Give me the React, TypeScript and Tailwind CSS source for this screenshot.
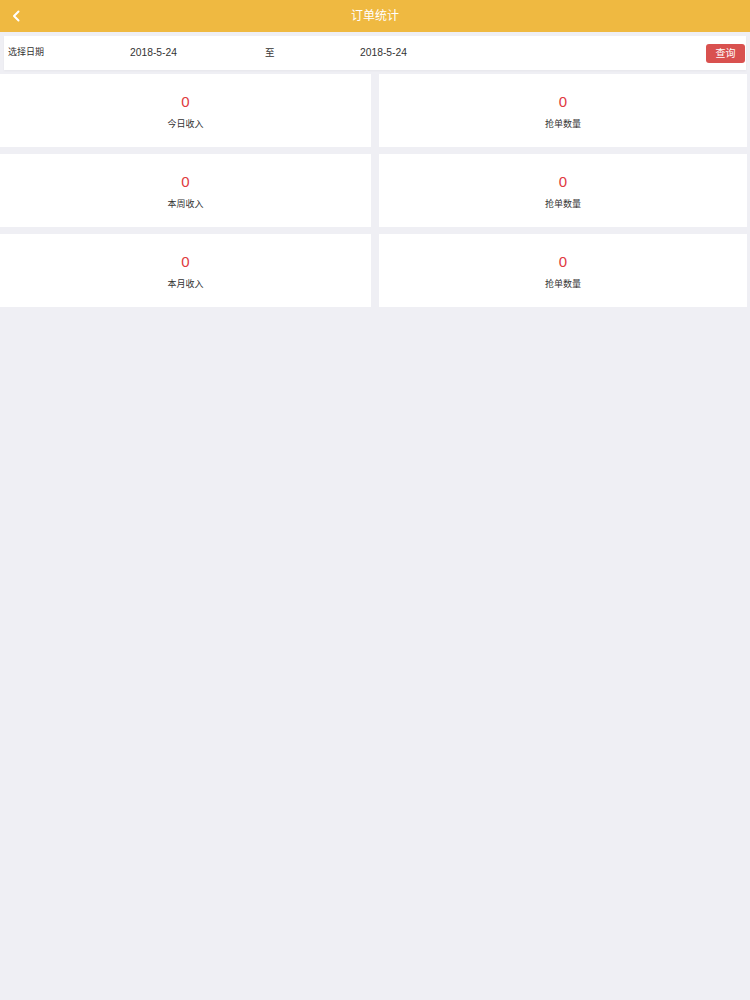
import React from "react";

const cards = [
  ["今日收入", "抢单数量"],
  ["本周收入", "抢单数量"],
  ["本月收入", "抢单数量"],
];

function Card({ label }: { label: string }) {
  return (
    <div className="h-[73px] bg-white flex flex-col items-center pt-[19px]">
      <div className="text-[15px] leading-[18px] text-[#e0393e]">0</div>
      <div className="mt-[7px] text-[9px] leading-[12px] text-[#333]">{label}</div>
    </div>
  );
}

export default function App() {
  return (
    <div
      className="min-h-[1000px] w-[750px] bg-[#efeff4]"
      style={{ fontFamily: '"Liberation Sans", "Noto Sans CJK SC", sans-serif' }}
    >
      <div className="h-[32px] bg-[#efb941] relative flex items-center justify-center">
        <svg
          className="absolute left-[12px] top-[10px]"
          width="9"
          height="12"
          viewBox="0 0 9 12"
          fill="none"
        >
          <path d="M6.5 1.5 L2 6 L6.5 10.5" stroke="#fff" strokeWidth="2" strokeLinecap="round" strokeLinejoin="round" />
        </svg>
        <span className="text-[12px] text-white">订单统计</span>
      </div>
      <div className="pt-[4px]">
        <div className="ml-[4px] mr-[4px] h-[34px] bg-white flex items-center text-[10px] text-[#333] shadow-[0_1px_2px_rgba(0,0,0,0.04)]">
          <span className="w-[126px] pl-[4px] text-[9px]">选择日期</span>
          <span className="w-[135px] text-[10.3px]">2018-5-24</span>
          <span className="w-[95px] text-[9.5px]">至</span>
          <span className="flex-1 text-[10.3px]">2018-5-24</span>
          <span className="mr-[1px] w-[39px] h-[19px] rounded-[3px] bg-[#d9514f] text-white text-[10px] flex items-center justify-center">
            查询
          </span>
        </div>
      </div>
      <div className="mt-[4px] grid grid-cols-[371px_368px] gap-x-[8px] gap-y-[7px]">
        {cards.map(([a, b], i) => (
          <React.Fragment key={i}>
            <Card label={a} />
            <Card label={b} />
          </React.Fragment>
        ))}
      </div>
    </div>
  );
}
